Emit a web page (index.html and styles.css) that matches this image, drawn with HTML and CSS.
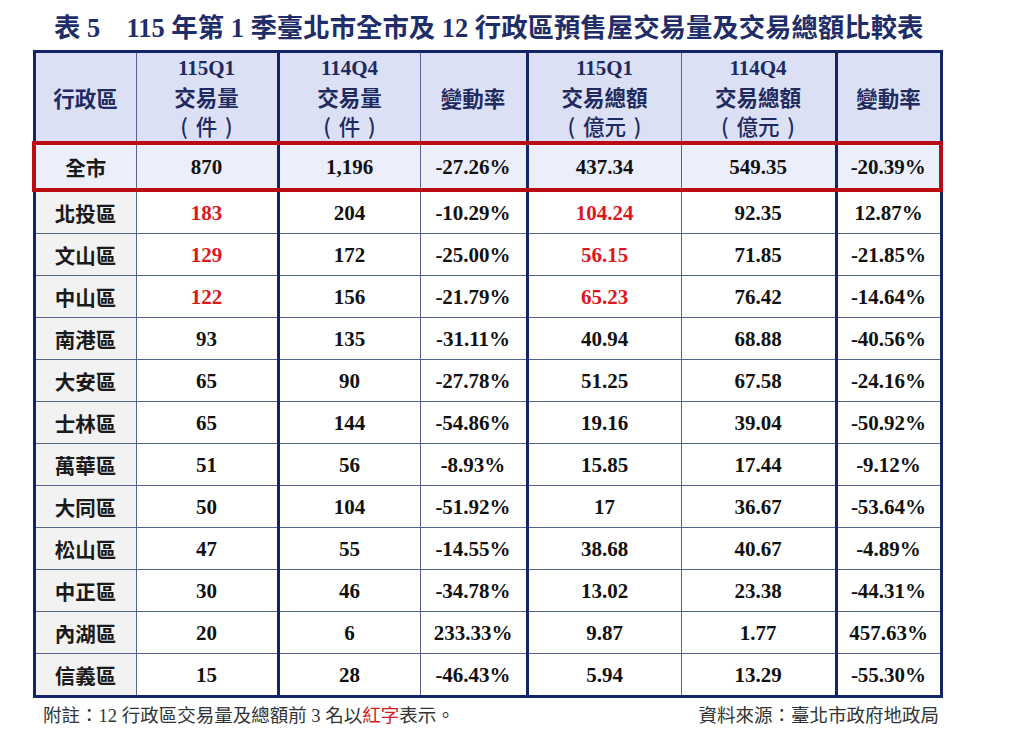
FILE: index.html
```html
<!DOCTYPE html>
<html lang="zh-Hant">
<head>
<meta charset="utf-8">
<title>表 5 預售屋交易量及交易總額比較表</title>
<link rel="stylesheet" href="styles.css">
</head>
<body>
<div class="page">
  <h1 class="title">表 5　115 年第 1 季臺北市全市及 12 行政區預售屋交易量及交易總額比較表</h1>
  <table class="grid">
    <colgroup>
      <col class="c0"><col class="c1"><col class="c2"><col class="c3"><col class="c4"><col class="c5"><col class="c6">
    </colgroup>
    <thead>
      <tr>
        <th><div class="cjk">行政區</div></th>
        <th><div class="num">115Q1</div><div class="cjk">交易量</div><div class="cjk paren">( 件 )</div></th>
        <th class="sep"><div class="num">114Q4</div><div class="cjk">交易量</div><div class="cjk paren">( 件 )</div></th>
        <th><div class="cjk">變動率</div></th>
        <th class="sep"><div class="num">115Q1</div><div class="cjk">交易總額</div><div class="cjk paren">( 億元 )</div></th>
        <th><div class="num">114Q4</div><div class="cjk">交易總額</div><div class="cjk paren">( 億元 )</div></th>
        <th class="sep"><div class="cjk">變動率</div></th>
      </tr>
    </thead>
    <tbody>
      <tr class="total">
        <td class="name">全市</td><td>870</td><td class="sep">1,196</td><td>-27.26%</td><td class="sep">437.34</td><td>549.35</td><td class="sep">-20.39%</td>
      </tr>
      <tr><td class="name">北投區</td><td class="hl">183</td><td class="sep">204</td><td>-10.29%</td><td class="sep hl">104.24</td><td>92.35</td><td class="sep">12.87%</td></tr>
      <tr><td class="name">文山區</td><td class="hl">129</td><td class="sep">172</td><td>-25.00%</td><td class="sep hl">56.15</td><td>71.85</td><td class="sep">-21.85%</td></tr>
      <tr><td class="name">中山區</td><td class="hl">122</td><td class="sep">156</td><td>-21.79%</td><td class="sep hl">65.23</td><td>76.42</td><td class="sep">-14.64%</td></tr>
      <tr><td class="name">南港區</td><td>93</td><td class="sep">135</td><td>-31.11%</td><td class="sep">40.94</td><td>68.88</td><td class="sep">-40.56%</td></tr>
      <tr><td class="name">大安區</td><td>65</td><td class="sep">90</td><td>-27.78%</td><td class="sep">51.25</td><td>67.58</td><td class="sep">-24.16%</td></tr>
      <tr><td class="name">士林區</td><td>65</td><td class="sep">144</td><td>-54.86%</td><td class="sep">19.16</td><td>39.04</td><td class="sep">-50.92%</td></tr>
      <tr><td class="name">萬華區</td><td>51</td><td class="sep">56</td><td>-8.93%</td><td class="sep">15.85</td><td>17.44</td><td class="sep">-9.12%</td></tr>
      <tr><td class="name">大同區</td><td>50</td><td class="sep">104</td><td>-51.92%</td><td class="sep">17</td><td>36.67</td><td class="sep">-53.64%</td></tr>
      <tr><td class="name">松山區</td><td>47</td><td class="sep">55</td><td>-14.55%</td><td class="sep">38.68</td><td>40.67</td><td class="sep">-4.89%</td></tr>
      <tr><td class="name">中正區</td><td>30</td><td class="sep">46</td><td>-34.78%</td><td class="sep">13.02</td><td>23.38</td><td class="sep">-44.31%</td></tr>
      <tr><td class="name">內湖區</td><td>20</td><td class="sep">6</td><td>233.33%</td><td class="sep">9.87</td><td>1.77</td><td class="sep">457.63%</td></tr>
      <tr><td class="name">信義區</td><td>15</td><td class="sep">28</td><td>-46.43%</td><td class="sep">5.94</td><td>13.29</td><td class="sep">-55.30%</td></tr>
    </tbody>
  </table>
  <div class="notes">
    <p class="note">附註：12 行政區交易量及總額前 3 名以<span class="red">紅字</span>表示。</p>
    <p class="source">資料來源：臺北市政府地政局</p>
  </div>
</div>
</body>
</html>
```

FILE: styles.css
```css
html, body {
  margin: 0;
  padding: 0;
  background: #ffffff;
}

body {
  font-family: "Liberation Serif", "Noto Sans CJK TC", serif;
  color: #111111;
}

.page {
  width: 907px;
  margin-left: 32px;
  padding-top: 12px;
}

.title {
  margin: 0 0 6px 22px;
  font-size: 26.4px;
  line-height: 32px;
  font-weight: 700;
  color: #1f2d68;
  white-space: nowrap;
}

.grid {
  border-collapse: collapse;
  width: 907px;
  table-layout: fixed;
  border: 3px solid #14246a;
}

.c0 { width: 102px; }
.c1 { width: 142px; }
.c2 { width: 142px; }
.c3 { width: 107px; }
.c4 { width: 154px; }
.c5 { width: 155px; }
.c6 { width: 105px; }

.grid th,
.grid td {
  border: 1px solid #55648c;
  text-align: center;
  vertical-align: middle;
  padding: 0;
}

.grid th {
  background: #dbe0f5;
  color: #1f2a5f;
  font-weight: 700;
  height: 88px;
}

.num {
  font-family: "Liberation Serif", serif;
  font-size: 21px;
  font-weight: 700;
  height: 28px;
  line-height: 28px;
}

.cjk {
  font-family: "Noto Sans CJK TC", sans-serif;
  font-size: 21.5px;
  font-weight: 700;
  height: 29px;
  line-height: 29px;
}

.paren {
  word-spacing: 3px;
  font-weight: 500;
}

.grid td {
  font-size: 21px;
  font-weight: 700;
  height: 41px;
  line-height: 24px;
}

.grid .sep {
  border-left: 3px solid #14246a;
}

.grid td.name {
  background: #f2f2f3;
  font-family: "Noto Sans CJK TC", sans-serif;
  font-size: 20.5px;
  font-weight: 700;
  color: #1a1a1a;
}

.grid tr.total td {
  background: #eceffa;
  height: 43px;
  border-top: 4px solid #b80d12;
  border-bottom: 4px solid #b80d12;
}

.grid tr.total td.name {
  background: #eceffa;
}

.grid tr.total td:first-child {
  border-left: 4px solid #b80d12;
}

.grid tr.total td:last-child {
  border-right: 4px solid #b80d12;
}

.grid td.hl {
  color: #e0161e;
}

.notes {
  display: flex;
  justify-content: space-between;
  align-items: center;
  padding: 6px 0 0 11px;
}

.note,
.source {
  margin: 0;
  font-size: 18.5px;
  line-height: 24px;
  font-weight: 400;
  color: #333333;
}

.red {
  color: #d6161d;
}
```
